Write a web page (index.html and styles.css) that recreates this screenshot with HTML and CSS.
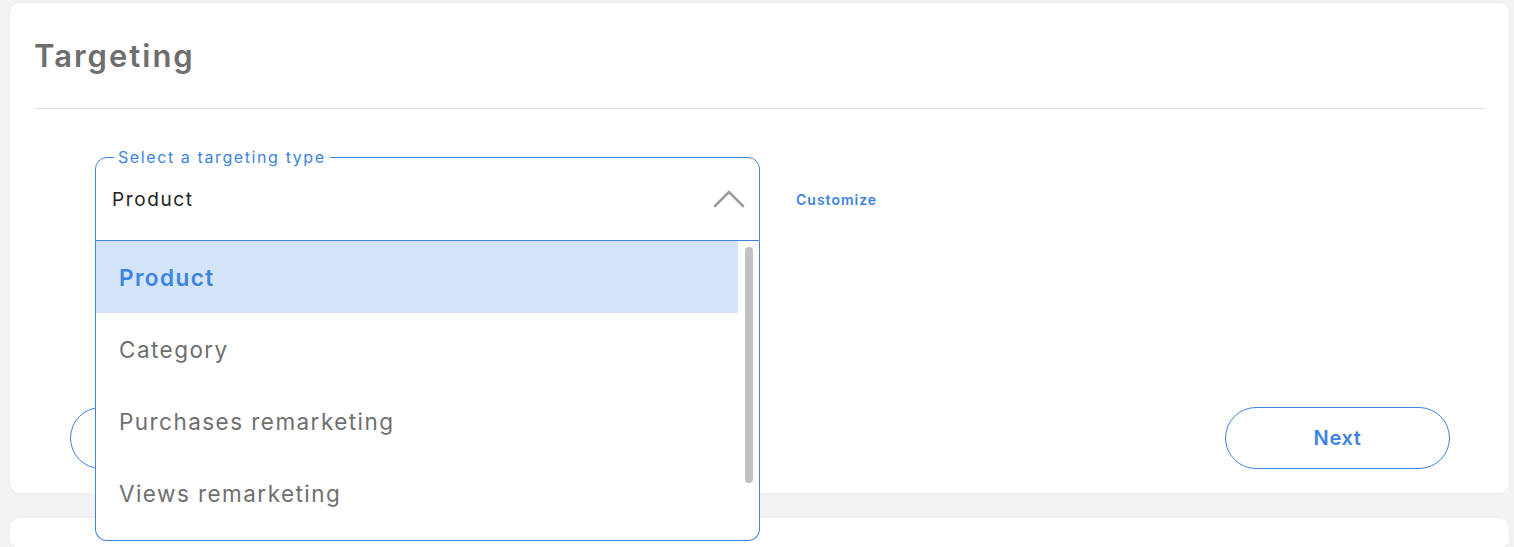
FILE: index.html
```html
<!DOCTYPE html>
<html>
<head>
<meta charset="utf-8">
<link rel="stylesheet" href="styles.css">
</head>
<body>
<div class="page">
  <section class="card">
    <h1 class="title">Targeting</h1>
    <div class="divider"></div>
    <div class="form-row">
      <div class="select">
        <fieldset class="select-box">
          <legend class="select-legend">Select a targeting type</legend>
          <span class="select-value">Product</span>
          <svg class="chevron" width="32" height="18" viewBox="0 0 32 18"><polyline points="2,16 16,2 30,16" fill="none" stroke="#9e9e9e" stroke-width="2.6" stroke-linecap="round" stroke-linejoin="round"/></svg>
        </fieldset>
        <ul class="options">
          <li class="option option-active">Product</li>
          <li class="option">Category</li>
          <li class="option">Purchases remarketing</li>
          <li class="option">Views remarketing</li>
          <li class="scrollbar"></li>
        </ul>
      </div>
      <a class="customize">Customize</a>
    </div>
    <div class="actions">
      <button class="btn" aria-label="Back"></button>
      <button class="btn">Next</button>
    </div>
  </section>
  <section class="card card-next"></section>
</div>
</body>
</html>
```

FILE: styles.css
```css
* { box-sizing: border-box; }
html, body { margin: 0; padding: 0; }
body {
  background: #f3f3f3;
  font-family: Inter, "Open Sans", sans-serif;
  width: 1514px;
  height: 547px;
  overflow: hidden;
}
.page {
  padding: 3px 5px 0 10px;
  display: flex;
  flex-direction: column;
  gap: 25px;
}
.card {
  background: #fff;
  border-radius: 10px;
  padding: 0 23px 24px 24px;
  box-shadow: 0 0 4px rgba(0,0,0,0.04);
}
.card-next { height: 30px; padding: 0; }
.title {
  margin: 0;
  padding-top: 33px;
  height: 105px;
  font-size: 31px;
  font-weight: 600;
  color: #6e6e6e;
  letter-spacing: 2px;
  line-height: 40px;
}
.divider {
  height: 1px;
  background: #e2e2e2;
}
.form-row {
  display: flex;
  align-items: flex-start;
  padding: 40px 0 0 61px;
  gap: 36px;
  position: relative;
  z-index: 2;
  height: 298px;
}
.select {
  position: relative;
  width: 665px;
}
.select-box {
  margin: 0;
  border: 1px solid #3d84e0;
  border-radius: 12px 12px 0 0;
  padding: 0 16px 0 16px;
  height: 92px;
  display: flex;
  align-items: center;
  justify-content: space-between;
}
.select-legend {
  padding: 0 4px;
  margin-left: 2px;
  font-size: 16px;
  color: #3d84e0;
  line-height: 16px;
  letter-spacing: 1.6px;
}
.select-value {
  font-size: 19px;
  color: #222;
  margin-top: -6px;
  letter-spacing: 1.6px;
}
.chevron { margin-top: -8px; margin-right: -2px; }
.options {
  position: absolute;
  left: 0;
  top: 100%;
  width: 100%;
  margin: 0;
  padding: 0 21px 0 0;
  list-style: none;
  background: #fff;
  border: 1px solid #3d84e0;
  border-top: none;
  border-radius: 0 0 12px 12px;
  height: 300px;
}
.option {
  height: 72px;
  display: flex;
  align-items: center;
  padding-left: 23px;
  font-size: 22.5px;
  color: #6f6f6f;
  letter-spacing: 1.45px;
}
.option-active {
  background: #d3e3f8;
  color: #3d84e0;
  font-weight: 600;
}
.scrollbar {
  position: absolute;
  right: 6px;
  top: 6px;
  width: 8px;
  height: 236px;
  border-radius: 4px;
  background: #c1c1c1;
}
.customize {
  font-size: 14px;
  font-weight: 600;
  color: #3d84e0;
  margin-top: 42px;
  letter-spacing: 1px;
}
.actions {
  display: flex;
  justify-content: space-between;
  padding: 0 36px;
}
.btn {
  width: 225px;
  height: 62px;
  border: 1px solid #3d84e0;
  border-radius: 31px;
  background: #fff;
  color: #3d84e0;
  font-family: inherit;
  font-size: 20px;
  font-weight: 600;
  letter-spacing: 0.6px;
}
```
